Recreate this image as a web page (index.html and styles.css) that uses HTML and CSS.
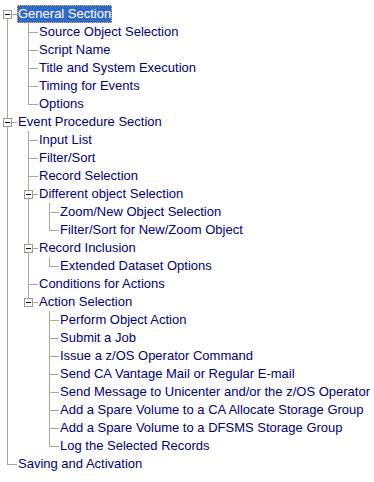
FILE: index.html
```html
<!DOCTYPE html>
<html>
<head>
  <title>Event Procedure Tree</title>
  <link rel="stylesheet" href="styles.css">
</head>
<body>
  <ul class="tree">
    <li>
      <span class="toggle"></span>
      <span class="label selected">General Section</span>
      <ul>
        <li><span class="label">Source Object Selection</span></li>
        <li><span class="label">Script Name</span></li>
        <li><span class="label">Title and System Execution</span></li>
        <li><span class="label">Timing for Events</span></li>
        <li><span class="label">Options</span></li>
      </ul>
    </li>
    <li>
      <span class="toggle"></span>
      <span class="label">Event Procedure Section</span>
      <ul>
        <li><span class="label">Input List</span></li>
        <li><span class="label">Filter/Sort</span></li>
        <li><span class="label">Record Selection</span></li>
        <li>
          <span class="toggle"></span>
          <span class="label">Different object Selection</span>
          <ul>
            <li><span class="label">Zoom/New Object Selection</span></li>
            <li><span class="label">Filter/Sort for New/Zoom Object</span></li>
          </ul>
        </li>
        <li>
          <span class="toggle"></span>
          <span class="label">Record Inclusion</span>
          <ul>
            <li><span class="label">Extended Dataset Options</span></li>
          </ul>
        </li>
        <li><span class="label">Conditions for Actions</span></li>
        <li>
          <span class="toggle"></span>
          <span class="label">Action Selection</span>
          <ul>
            <li><span class="label">Perform Object Action</span></li>
            <li><span class="label">Submit a Job</span></li>
            <li><span class="label">Issue a z/OS Operator Command</span></li>
            <li><span class="label">Send CA Vantage Mail or Regular E-mail</span></li>
            <li><span class="label">Send Message to Unicenter and/or the z/OS Operator</span></li>
            <li><span class="label">Add a Spare Volume to a CA Allocate Storage Group</span></li>
            <li><span class="label">Add a Spare Volume to a DFSMS Storage Group</span></li>
            <li><span class="label">Log the Selected Records</span></li>
          </ul>
        </li>
      </ul>
    </li>
    <li><span class="label">Saving and Activation</span></li>
  </ul>
</body>
</html>
```

FILE: styles.css
```css
:root {
  --line-color: #aca899;
  --text-color: #000080;
  --select-color: #316ac5;
}

body {
  margin: 0;
  background: #ffffff;
  color: var(--text-color);
  font-family: "Liberation Sans", Arial, sans-serif;
  font-size: 13px;
}

.tree,
.tree ul {
  list-style: none;
  margin: 0;
  padding: 0;
}

.tree {
  padding-top: 5px;
}

.tree ul {
  margin-left: 4px;
}

.tree li {
  position: relative;
  padding-left: 17px;
}

/* tree lines */
.tree li::before {
  content: "";
  position: absolute;
  left: 7px;
  top: 0;
  bottom: 0;
  border-left: 1px solid var(--line-color);
}

.tree li:last-child::before {
  bottom: auto;
  height: 9px;
}

.tree > li:first-child::before {
  top: 9px;
}

.tree li::after {
  content: "";
  position: absolute;
  left: 7px;
  top: 9px;
  width: 10px;
  border-top: 1px solid var(--line-color);
}

/* expand / collapse box */
.toggle {
  position: absolute;
  left: 3px;
  top: 5px;
  width: 7px;
  height: 7px;
  border: 1px solid #9a9a8e;
  background: #ffffff;
  z-index: 1;
}

.toggle::after {
  content: "";
  position: absolute;
  left: 1px;
  top: 3px;
  width: 5px;
  height: 1px;
  background: #000000;
}

.label {
  display: inline-block;
  height: 18px;
  line-height: 18px;
  padding: 0 1px;
  white-space: nowrap;
}

.label.selected {
  background: var(--select-color);
  color: #ffffff;
  outline: 1px dotted #e8b860;
  outline-offset: -1px;
}
```
